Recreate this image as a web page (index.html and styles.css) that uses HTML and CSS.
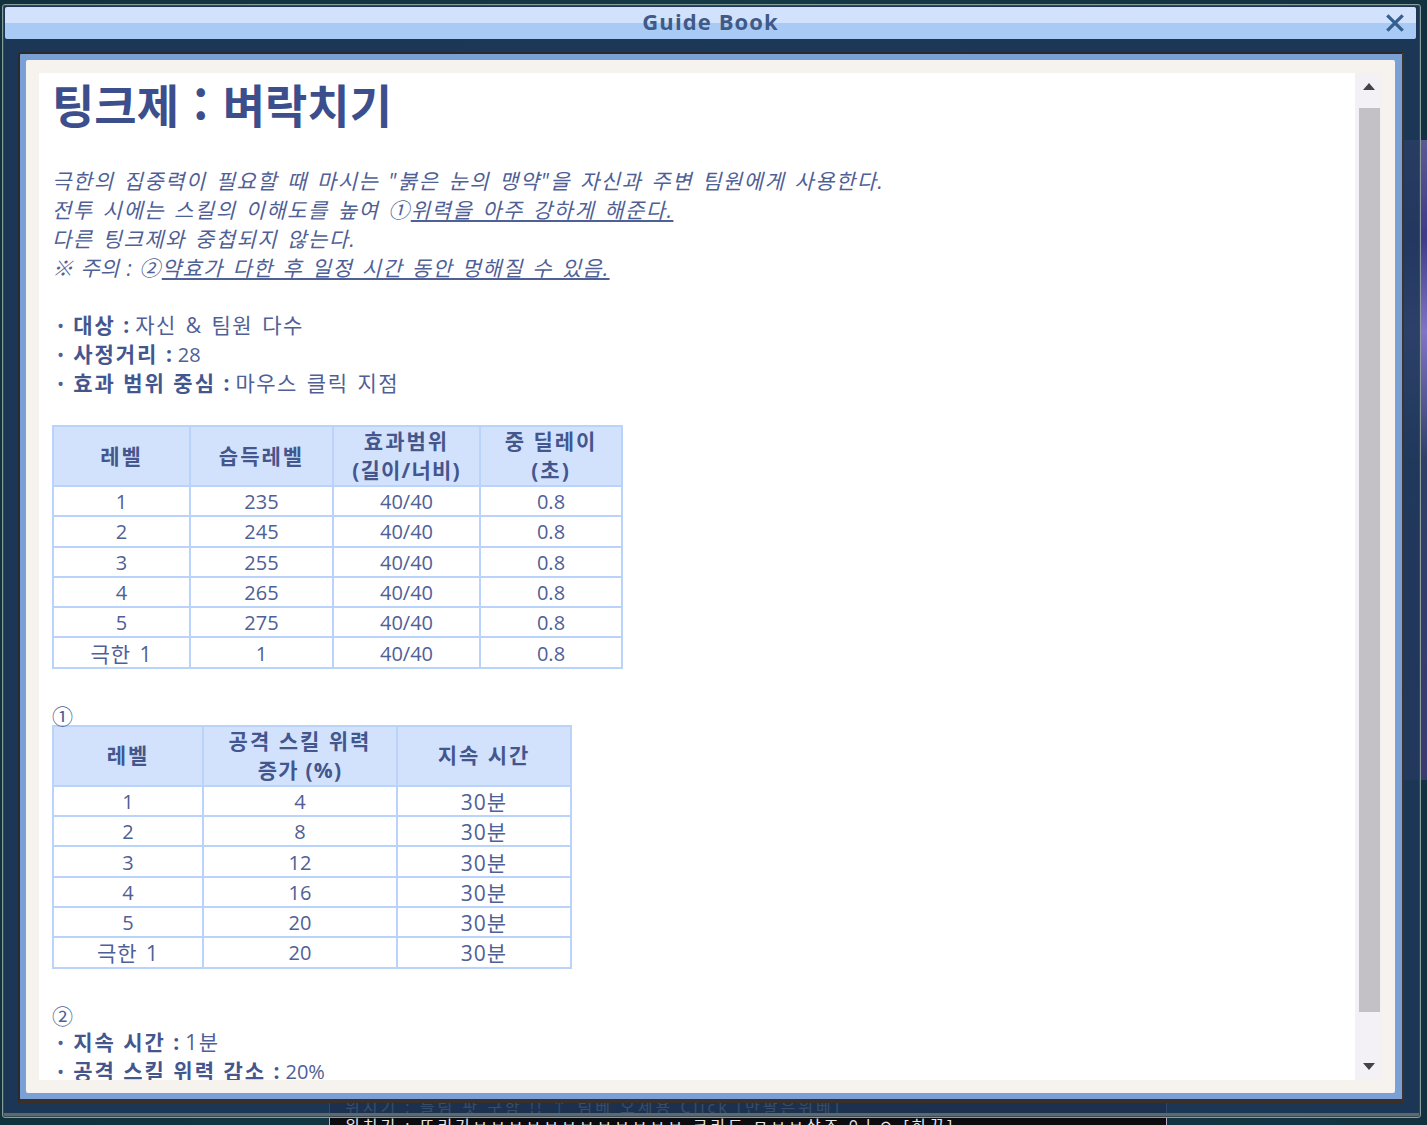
FILE: index.html
```html
<!DOCTYPE html>
<html lang="ko">
<head>
<meta charset="utf-8">
<title>Guide Book</title>
<link rel="stylesheet" href="styles.css">
</head>
<body>
<div class="backdrop">
  <div class="game-strip"></div>
  <div class="game-chat">
    <p class="chat-faint">위지기 : 들림 팟 구함 !! ↑ 팀베 오세용 Click [만팔은위베]</p>
    <p class="chat-line">위치기 : 뜨리기ㅂㅂㅂㅂㅂㅂㅂㅂㅂㅂㅂㅂ 크리도 ㅁㅂㅂ삽죠 0ㅣㅇ [하꿍]</p>
  </div>
</div>
<div class="window">
  <header class="titlebar">
    <span class="title">Guide Book</span>
    <svg class="close" viewBox="0 0 20 20" aria-label="close"><path d="M3 3L17 17M17 3L3 17"/></svg>
  </header>
  <div class="panel">
    <div class="viewer">
      <main class="content">
        <h1 class="heading">팅크제 : 벼락치기</h1>
        <div class="gap-heading"></div>
        <p class="line desc">극한의 집중력이 필요할 때 마시는 "붉은 눈의 맹약"을 자신과 주변 팀원에게 사용한다.</p>
        <p class="line desc">전투 시에는 스킬의 이해도를 높여 ①<u>위력을 아주 강하게 해준다.</u></p>
        <p class="line desc">다른 팅크제와 중첩되지 않는다.</p>
        <p class="line desc"><span class="note">※ 주의 : </span>②<u class="note-tail">약효가 다한 후 일정 시간 동안 멍해질 수 있음.</u></p>
        <div class="gap-line"></div>
        <p class="line"><span class="dot">•</span><b>대상 :</b> 자신 &amp; 팀원 다수</p>
        <p class="line"><span class="dot">•</span><b>사정거리 :</b> <span class="num">28</span></p>
        <p class="line"><span class="dot">•</span><b>효과 범위 중심 :</b> 마우스 클릭 지점</p>
        <table class="grid grid-a">
          <colgroup><col class="a1"><col class="a2"><col class="a3"><col class="a4"></colgroup>
          <thead><tr><th>레벨</th><th>습득레벨</th><th>효과범위<br><span class="sub">(길이/너비)</span></th><th>중 딜레이<br>(초)</th></tr></thead>
          <tbody>
            <tr><td>1</td><td>235</td><td>40/40</td><td>0.8</td></tr>
            <tr><td>2</td><td>245</td><td>40/40</td><td>0.8</td></tr>
            <tr><td>3</td><td>255</td><td>40/40</td><td>0.8</td></tr>
            <tr><td>4</td><td>265</td><td>40/40</td><td>0.8</td></tr>
            <tr><td>5</td><td>275</td><td>40/40</td><td>0.8</td></tr>
            <tr><td class="ko">극한 1</td><td>1</td><td>40/40</td><td>0.8</td></tr>
          </tbody>
        </table>
        <p class="line mark mark-a">①</p>
        <table class="grid grid-b">
          <colgroup><col class="b1"><col class="b2"><col class="b3"></colgroup>
          <thead><tr><th>레벨</th><th>공격 스킬 위력<br><span class="sub">증가 (%)</span></th><th>지속 시간</th></tr></thead>
          <tbody>
            <tr><td>1</td><td>4</td><td class="ko">30분</td></tr>
            <tr><td>2</td><td>8</td><td class="ko">30분</td></tr>
            <tr><td>3</td><td>12</td><td class="ko">30분</td></tr>
            <tr><td>4</td><td>16</td><td class="ko">30분</td></tr>
            <tr><td>5</td><td>20</td><td class="ko">30분</td></tr>
            <tr><td class="ko">극한 1</td><td>20</td><td class="ko">30분</td></tr>
          </tbody>
        </table>
        <p class="line mark mark-b">②</p>
        <p class="line"><span class="dot">•</span><b>지속 시간 :</b> 1분</p>
        <p class="line"><span class="dot">•</span><b>공격 스킬 위력 감소 :</b> <span class="num">20%</span></p>
      </main>
      <aside class="scrollbar">
        <span class="arrow arrow-up"></span>
        <div class="track"><div class="thumb"></div></div>
        <span class="arrow arrow-down"></span>
      </aside>
    </div>
  </div>
</div>
</body>
</html>
```
FILE: styles.css
```css
* { box-sizing: border-box; }
html, body { margin: 0; height: 100%; overflow: hidden; }
body {
  width: 1427px;
  height: 1125px;
  position: relative;
  background: linear-gradient(90deg, #10323c, #143a46 50%, #123240);
  font-family: "Open Sans", "Noto Sans CJK KR", sans-serif;
  color: #4f6096;
}
.backdrop { position: absolute; inset: 0; }
.game-strip {
  position: absolute;
  left: 1402px; top: 140px;
  width: 25px; height: 640px;
  background: linear-gradient(180deg, #5b5a93 0, #3e3a86 15%, #8173c6 30%, #2f3f66 50%, #3b3a70 100%);
}
.game-chat {
  position: absolute;
  left: 329px; top: 1096px;
  width: 838px; height: 29px;
  background: #0b0b10;
  border-left: 1px solid #b9a7c4;
  border-right: 1px solid #b9a7c4;
  padding: 2px 15px 0;
  font-size: 16px;
  line-height: 19px;
  color: #e8e8e8;
  letter-spacing: 3px;
  overflow: hidden;
}
.game-chat p { margin: 0; white-space: nowrap; }
.chat-faint { color: #cfcfcf; }
.window {
  position: absolute;
  left: 2px; top: 4px;
  width: 1419px; height: 1114px;
  padding: 2px 4px 0 2px;
  border: 1px solid #8a9c9c;
  border-radius: 3px;
  background: rgba(30, 56, 90, .86);
  box-shadow: inset 0 0 0 1px #39484f, inset 0 -4px 0 #5b6a70;
}
.titlebar {
  height: 32px;
  position: relative;
  display: flex;
  align-items: center;
  justify-content: center;
  border-radius: 2px;
  background: linear-gradient(180deg, #d3e2fc 0, #d3e2fc 50%, #a9caf5 50%, #a9caf5 100%);
}
.title {
  font-family: "Open Sans", sans-serif;
  font-weight: 700;
  font-size: 22px;
  letter-spacing: 1.1px;
  color: #3f5a86;
  padding-bottom: 5px;
}
.close {
  position: absolute;
  right: 10px; top: 5px;
  width: 22px; height: 22px;
  fill: none;
  stroke: #33608f;
  stroke-width: 3;
}
.panel {
  margin: 13px 0 0 13px;
  width: 1386px;
  height: 1051px;
  border: 2px solid #2c2a2c;
  border-right-color: #3a342f;
  border-bottom: 4px solid #3a3029;
  border-top-left-radius: 3px;
  background: #7aa0d6;
  padding: 6px 7px 6px 6px;
}
.viewer {
  height: 1033px;
  background: #f6f3ee;
  padding: 13px;
  display: flex;
  border-radius: 2px;
}
.content {
  width: 1316px;
  height: 1007px;
  background: #fff;
  overflow: hidden;
  padding: 0 13px;
  font-size: 21px;
  letter-spacing: 1.5px;
  word-spacing: 2px;
  line-height: 29px;
}
.heading {
  margin: 0;
  height: 65px;
  font-size: 46px;
  line-height: 61px;
  font-weight: 700;
  letter-spacing: 0;
  word-spacing: 1.5px;
  color: #3c4f8c;
  font-family: "Noto Sans CJK KR", sans-serif;
}
.gap-heading { height: 29px; }
.gap-line { height: 28px; }
.line {
  margin: 0;
  height: 29px;
  white-space: nowrap;
}
.desc { font-style: italic; }
.note { letter-spacing: 0; word-spacing: 2px; }
.note-tail { letter-spacing: 1.3px; }
.dot { margin: 0 9px 0 5px; font-size: 19px; letter-spacing: 0; }
.num { font-size: 20px; letter-spacing: 0; }
b { font-weight: 700; color: #44568e; letter-spacing: 2px; word-spacing: 0; margin-right: -5px; }
.grid {
  border-collapse: collapse;
  table-layout: fixed;
  text-align: center;
  margin-top: 27px;
}
.grid-a { width: 569px; }
.grid-b { width: 518px; margin-top: 0; }
.a1 { width: 137px; } .a2 { width: 143px; } .a3 { width: 147px; } .a4 { width: 142px; }
.b1 { width: 150px; } .b2 { width: 194px; } .b3 { width: 174px; }
.grid th, .grid td {
  border: 2px solid #b9d3fb;
  padding: 0;
}
.grid th {
  height: 59px;
  background: #d3e2fc;
  font-weight: 700;
  line-height: 29px;
  color: #44568e;
  letter-spacing: 2px;
  word-spacing: 0;
}
.grid th .sub { letter-spacing: 1.2px; }
.grid td {
  height: 30.3px;
  padding-top: 2px;
  line-height: 26px;
  font-size: 20px;
  letter-spacing: 0;
}
.grid td.ko { font-size: 21px; letter-spacing: 1px; }
.mark { box-sizing: content-box; padding-top: 36px; height: 20px; line-height: 22px; letter-spacing: 0; }
.mark-b { padding-top: 36px; height: 23px; }
.scrollbar {
  width: 27px;
  height: 1007px;
  background: #f3f1f5;
  position: relative;
}
.track { position: absolute; top: 35px; left: 4px; width: 21px; }
.thumb { height: 904px; background: #c3c1c5; }
.arrow { position: absolute; width: 0; height: 0; left: 8px; border-left: 6px solid transparent; border-right: 6px solid transparent; }
.arrow-up { top: 10px; border-bottom: 7px solid #444; }
.arrow-down { bottom: 10px; border-top: 7px solid #444; }
```
